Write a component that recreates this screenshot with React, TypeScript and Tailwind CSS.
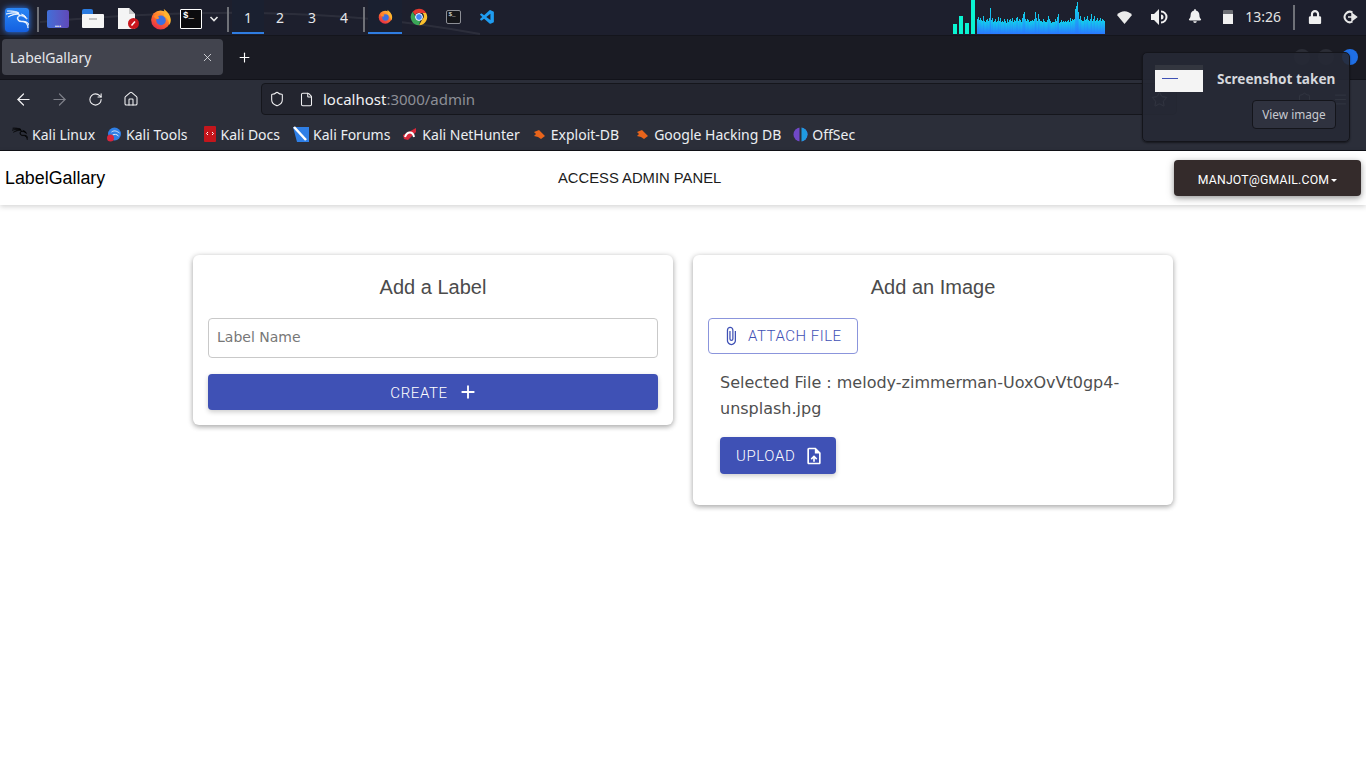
import { ArrowLeft, ArrowRight, File, Home, Menu, Plus, RotateCw, Shield, Star, X } from 'lucide-react';
import { FaBell, FaLock } from 'react-icons/fa';
import { MdAdd, MdAttachFile, MdOutlineUploadFile } from 'react-icons/md';
import { SiKalilinux } from 'react-icons/si';
import { VscVscode } from 'react-icons/vsc';

const graphHeights = [
  15, 17, 14, 16, 14, 13, 18, 13, 12, 14, 15, 13, 16, 26, 14, 16, 12, 13, 15, 12, 13, 17, 13, 16, 12, 13, 12, 15, 13,
  11, 15, 12, 14, 15, 13, 16, 12, 14, 13, 16, 17, 13, 15, 14, 12, 16, 20, 22, 15, 13, 15, 14, 12, 13, 13, 14, 13, 15,
  22, 16, 13, 20, 15, 13, 13, 12, 15, 13, 12, 12, 14, 18, 15, 13, 11, 12, 12, 12, 15, 13, 17, 20, 11, 12, 14, 12, 13,
  12, 13, 12, 13, 14, 12, 16, 13, 15, 14, 15, 25, 28, 32, 22, 15, 18, 14, 13, 13, 17, 14, 15, 18, 14, 13, 15, 20, 13,
  15, 18, 13, 14, 16, 13, 14, 16, 13, 15, 14, 13,
];

function Firefox({ size = 20 }: { size?: number }) {
  return (
    <svg width={size} height={size} viewBox="0 0 24 24">
      <defs>
        <linearGradient id="ff" x1="0.8" y1="0" x2="0.2" y2="1">
          <stop offset="0" stopColor="#ffc53a" />
          <stop offset="0.5" stopColor="#ff6a2a" />
          <stop offset="1" stopColor="#e2264d" />
        </linearGradient>
      </defs>
      <circle cx="11.6" cy="13" r="10.4" fill="url(#ff)" />
      <path d="M15 1c3 2 7 6 7.6 11 .3 3-.5 5-1.6 6.5 0-4-2-8-6-9.500C16 7 16 4 15 1z" fill="#ffb52e" />
      <circle cx="12" cy="13.500" r="5.200" fill="#3d6fe0" />
      <path d="M4 9c2-2 5-3 8-2.500-2 .5-3 1.800-3.500 3 3 1 1 3-1 2.500C6 11.500 5 10.500 4 9z" fill="#ff8a2b" />
    </svg>
  );
}

function Chrome() {
  return (
    <svg width="18" height="18" viewBox="0 0 24 24">
      <path d="M12 1a11 11 0 0 1 9.500 5.500H12a5.500 5.500 0 0 0-5 3.200L3.500 5A11 11 0 0 1 12 1z" fill="#e5392f" />
      <path d="M21.500 6.500A11 11 0 0 1 12 23l4.700-8.200a5.500 5.500 0 0 0 0-8.300z" fill="#fbc02d" />
      <path d="M12 23A11 11 0 0 1 3.500 5L8 12.800a5.500 5.500 0 0 0 5.500 4.500z" fill="#3aa757" />
      <circle cx="12" cy="12" r="4.600" fill="#4285f4" stroke="#fff" strokeWidth="1.300" />
    </svg>
  );
}

function Terminal({ small = false }: { small?: boolean }) {
  return small ? (
    <div className="h-[14px] w-[15px] rounded-[2px] border border-[#8d8f96] bg-[#15161a] pl-[2px] font-['Liberation_Mono',monospace] text-[6px] leading-[8px] text-white">
      $_
    </div>
  ) : (
    <div className="h-[20px] w-[22px] rounded-[1px] border border-white bg-[#0b0b0e] pl-[2px] font-['Liberation_Mono',monospace] text-[9px] font-bold leading-[13px] text-white">
      $_
    </div>
  );
}

function Separator() {
  return <div className="h-[25px] w-[2px] bg-[#6f7178]" />;
}

function Workspace({ n, active = false }: { n: number; active?: boolean }) {
  return (
    <div
      className={`flex h-[34px] w-[32px] items-center justify-center border-b-2 pt-[2px] text-[14px] text-[#e4e6ea] ${
        active ? 'border-[#2f7de1] bg-[#1a2030]' : 'border-transparent'
      }`}
    >
      {n}
    </div>
  );
}

function TopPanel() {
  return (
    <div className="relative flex h-[36px] items-start justify-between border-b border-[#14151c] bg-[#1d1f2d] font-['Noto_Sans',sans-serif]">
      <svg className="absolute inset-0" width="1366" height="36" aria-hidden="true">
        <path d="M40 22 C 180 10, 330 6, 480 34" stroke="#ffffff" strokeOpacity="0.07" strokeWidth="2" fill="none" />
      </svg>
      <div className="relative flex items-center">
        <div className="ml-[5px] mt-[5px] flex h-[24px] w-[24px] items-center justify-center rounded-[3px] bg-gradient-to-b from-[#2a86f5] to-[#1560e0] text-white shadow-[0_0_6px_#2f80ff]">
          <SiKalilinux size={23} className="stroke-white stroke-[0.7]" />
        </div>
        <div className="ml-[8px] mt-[4px]">
          <Separator />
        </div>
        <div className="ml-[8px] mt-[3px] flex h-[18px] w-[22px] items-end justify-center rounded-[2px] bg-gradient-to-r from-[#3f6fd8] to-[#5f49b8] pb-[1px] text-[8px] font-bold leading-[6px] text-white">
          ...
        </div>
        <div className="ml-[13px] mt-[3px] flex h-[20px] w-[22px] flex-col">
          <div className="h-[5px] w-[11px] rounded-t-[2px] bg-[#2a7be0]" />
          <div className="flex h-[14px] items-start justify-center rounded-[1px] bg-[#f5f5f5] pt-[4px]">
            <div className="h-[2px] w-[8px] bg-[#c4c4c4]" />
          </div>
        </div>
        <svg className="ml-[14px] mt-[3px]" width="22" height="23" viewBox="0 0 22 23">
          <path d="M0 1h11l6 6v15H0z" fill="#f4f4f4" />
          <path d="M11 1l6 6h-6z" fill="#c9c9c9" />
          <circle cx="15.500" cy="16.500" r="5.500" fill="#c8161d" />
          <path d="M13.500 18.500l3.500-4" stroke="#fff" strokeWidth="1.500" />
        </svg>
        <div className="ml-[10px] mt-[4px]">
          <Firefox size={22} />
        </div>
        <div className="ml-[8px] mt-[3px]">
          <Terminal />
        </div>
        <svg className="ml-[7px] mt-[4px]" width="10" height="8" viewBox="0 0 10 8">
          <path d="M1.500 2 L5 5.500 L8.500 2" stroke="#e6e6e6" strokeWidth="1.600" fill="none" />
        </svg>
        <div className="ml-[8px] mt-[4px]">
          <Separator />
        </div>
        <div className="ml-[3px] flex">
          <Workspace n={1} active />
          <Workspace n={2} />
          <Workspace n={3} />
          <Workspace n={4} />
        </div>
        <div className="ml-[3px] mt-[4px]">
          <Separator />
        </div>
        <div className="ml-[3px] flex">
          <div className="flex h-[34px] w-[34px] items-center justify-center border-b-2 border-[#2f7de1] bg-[#1a2030]">
            <Firefox size={15} />
          </div>
          <div className="flex h-[34px] w-[34px] items-center justify-center">
            <Chrome />
          </div>
          <div className="flex h-[34px] w-[34px] items-center justify-center">
            <Terminal small />
          </div>
          <div className="flex h-[34px] w-[34px] items-center justify-center text-[#1f9cf0]">
            <VscVscode size={17} />
          </div>
        </div>
      </div>
      <div className="relative flex items-start">
        <svg width="152" height="34" viewBox="0 0 152 34" aria-hidden="true">
          <defs>
            <linearGradient id="net" x1="0" y1="0" x2="0" y2="1">
              <stop offset="0" stopColor="#12d0ec" />
              <stop offset="1" stopColor="#2a78ff" />
            </linearGradient>
          </defs>
          <rect x="0" y="24" width="4" height="10" fill="#0af5d2" />
          <rect x="6" y="16" width="4" height="18" fill="#0af5d2" />
          <rect x="12" y="23" width="4" height="11" fill="#0af5d2" />
          <rect x="18" y="0" width="4" height="34" fill="#0af5d2" />
          {graphHeights.map((h, i) => (
            <rect key={i} x={24 + i} y={34 - h} width="1" height={h} fill="url(#net)" />
          ))}
        </svg>
        <svg className="ml-[12px] mt-[11px]" width="15" height="13" viewBox="0 0 15 13">
          <path d="M0 4 C4 -1 11 -1 15 4 L7.500 13z" fill="#ebebeb" />
        </svg>
        <svg className="ml-[19px] mt-[9px]" width="17" height="16" viewBox="0 0 17 16">
          <path d="M0 5h3l5-5v16l-5-5H0z" fill="#f0f0f0" />
          <path d="M10 2.500a5.500 5.500 0 0 1 0 11" stroke="#f0f0f0" strokeWidth="2" fill="none" />
          <path d="M10 5.500a2.500 2.500 0 0 1 0 5z" fill="#f0f0f0" />
        </svg>
        <div className="ml-[20px] mt-[9px] text-[#f0f0f0]">
          <FaBell size={14} />
        </div>
        <div className="ml-[21px] mt-[10px] flex h-[14px] w-[10px] flex-col rounded-[1px] bg-[#6d6f75]">
          <div className="mt-[4px] h-[10px] bg-[#f0f0f0]" />
        </div>
        <div className="ml-[12px] mt-[7px] text-[14px] leading-[20px] text-[#e4e4e4]">13:26</div>
        <div className="ml-[12px] mt-[5px]">
          <Separator />
        </div>
        <div className="ml-[13px] mt-[10px] text-[#f0f0f0]">
          <FaLock size={14} />
        </div>
        <svg className="ml-[21px] mr-[8px] mt-[10px]" width="15" height="14" viewBox="0 0 15 14">
          <path d="M9.500 2.500A5.200 5.200 0 1 0 9.500 11.500" stroke="#e8e8e8" strokeWidth="2" fill="none" />
          <path d="M5 7h6M9 3.500L13.500 7 9 10.500z" stroke="#e8e8e8" strokeWidth="1.500" fill="#e8e8e8" />
        </svg>
      </div>
    </div>
  );
}

function TabBar() {
  return (
    <div className="flex h-[44px] items-center justify-between border-b border-[#12131a] bg-[#1a1b23] pb-[1px] font-['Noto_Sans',sans-serif]">
      <div className="flex items-center">
        <div className="ml-[2px] flex h-[36px] w-[221px] items-center justify-between rounded-[4px] bg-[#42444e] pl-[8px] pr-[9px] text-[14px] text-[#e6e7eb]">
          LabelGallary
          <X size={13} strokeWidth={1.500} />
        </div>
        <Plus size={15} className="ml-[14px] text-white" strokeWidth={1.800} />
      </div>
      <div className="mr-[8px] flex gap-[8px]">
        <div className="h-[16px] w-[16px] rounded-full bg-[#2b2d36]" />
        <div className="h-[16px] w-[16px] rounded-full bg-[#2b2d36]" />
        <div className="h-[16px] w-[16px] rounded-full bg-[#1f6fe5]" />
      </div>
    </div>
  );
}

function NavBar() {
  return (
    <div className="flex h-[39px] items-center bg-[#2b2e39] pb-[1px] font-['Noto_Sans',sans-serif] text-[#f1f1f3]">
      <ArrowLeft size={19} strokeWidth={1.500} className="ml-[14px]" />
      <ArrowRight size={19} strokeWidth={1.500} className="ml-[17px] text-[#7d7f88]" />
      <RotateCw size={15} strokeWidth={1.700} className="ml-[19px]" />
      <Home size={16} strokeWidth={1.600} className="ml-[20px]" />
      <div className="ml-[122px] flex h-[32px] w-[916px] items-center rounded-[4px] border border-[#15161c] bg-[#23252f] text-[15px]">
        <Shield size={16} strokeWidth={1.600} className="ml-[7px]" />
        <File size={15} strokeWidth={1.700} className="ml-[14px]" />
        <span className="ml-[9px]">
          localhost<span className="text-[#8d8f97]">:3000/admin</span>
        </span>
        <div className="ml-auto flex h-[32px] w-[34px] items-center justify-center">
          <Star size={17} strokeWidth={1.400} className="text-[#9a9ca4]" />
        </div>
      </div>
      <Shield size={15} strokeWidth={1.500} className="ml-[120px] text-[#9a9ca4]" />
      <Menu size={15} strokeWidth={1.500} className="ml-[21px] text-[#9a9ca4]" />
    </div>
  );
}

function Bookmark({ label, icon, gap = 'ml-[13px]' }: { label: string; icon: React.ReactNode; gap?: string }) {
  return (
    <div className={`flex items-center ${gap}`}>
      {icon}
      <span className="ml-[4px]">{label}</span>
    </div>
  );
}

function Bug() {
  return (
    <svg width="16" height="14" viewBox="0 0 14 14">
      <path d="M2 5 L7 3 L13 9 L9 12 L6 10 L2 9 L4 7z" fill="#e8641b" />
    </svg>
  );
}

function Bookmarks() {
  return (
    <div className="flex h-[31px] items-center bg-[#2b2e39] pb-[1px] pl-[12px] font-['Noto_Sans',sans-serif] text-[14px] text-[#eceef2]">
      <Bookmark
        gap=""
        label="Kali Linux"
        icon={<SiKalilinux size={16} className="stroke-black stroke-[0.6] text-black" />}
      />
      <Bookmark
        gap="ml-[11px]"
        label="Kali Tools"
        icon={
          <svg width="16" height="15" viewBox="0 0 15 15">
            <circle cx="8" cy="7" r="6.500" fill="#2f7fe6" />
            <path d="M5 5c3-2 5-1 8 1M6 8c2-1 4-1 6 1" stroke="#dfeaff" strokeWidth="1" fill="none" />
            <circle cx="4" cy="11" r="3.500" fill="#d7263d" />
          </svg>
        }
      />
      <Bookmark
        gap="ml-[15px]"
        label="Kali Docs"
        icon={
          <svg width="14" height="16" viewBox="0 0 14 16">
            <rect x="1" y="0" width="12" height="16" rx="1" fill="#c4161c" />
            <path d="M5 6 L3.500 7.500 L5 9 M9 6 L10.500 7.500 L9 9" stroke="#fff" strokeWidth="1" fill="none" />
          </svg>
        }
      />
      <Bookmark
        gap="ml-[13px]"
        label="Kali Forums"
        icon={
          <svg width="16" height="16" viewBox="0 0 16 16">
            <path d="M0 1h16v15H4z" fill="#2f7fe6" />
            <path d="M1 1 L13 14" stroke="#fff" strokeWidth="2.500" />
          </svg>
        }
      />
      <Bookmark
        gap="ml-[12px]"
        label="Kali NetHunter"
        icon={
          <svg width="16" height="16" viewBox="0 0 16 16">
            <path d="M1 9 L14 2 L14 6 L6 14 L2 13z" fill="#d8283a" />
            <path d="M3 11 C5 5, 11 5, 12 11" stroke="#fff" strokeWidth="2" fill="none" />
          </svg>
        }
      />
      <Bookmark gap="ml-[11px]" label="Exploit-DB" icon={<Bug />} />
      <Bookmark gap="ml-[15px]" label="Google Hacking DB" icon={<Bug />} />
      <Bookmark
        gap="ml-[12px]"
        label="OffSec"
        icon={
          <svg width="15" height="15" viewBox="0 0 15 15">
            <circle cx="7.500" cy="7.500" r="7" fill="#7048c8" />
            <path d="M7.500 .5a7 7 0 0 1 0 14z" fill="#1f9be0" />
            <rect x="6.500" y="0" width="2" height="15" fill="#2b2e39" />
          </svg>
        }
      />
    </div>
  );
}

function ScreenshotToast() {
  return (
    <div className="absolute left-[1142px] top-[52px] h-[90px] w-[208px] rounded-[5px] border border-[#14151b] bg-[#262935]/90 font-['Noto_Sans',sans-serif] shadow-[0_1px_2px_rgba(0,0,0,0.5)]">
      <div className="flex items-start pl-[12px] pt-[12px]">
        <div className="h-[27px] w-[48px] bg-[#f4f4f4]">
          <div className="h-[5px] bg-[#33363f]" />
          <div className="ml-[7px] mt-[8px] h-[1px] w-[16px] bg-[#3f51b5]" />
        </div>
        <div className="ml-[14px] text-[13.600px] font-bold leading-[27px] text-[#d5d7dc]">Screenshot taken</div>
      </div>
      <div className="mr-[13px] mt-[8px] flex justify-end">
        <div className="flex h-[29px] w-[84px] items-center justify-center rounded-[4px] border border-[#14151b] bg-[#2f323f] text-[11.800px] text-[#c8cad0]">
          View image
        </div>
      </div>
    </div>
  );
}

function AppNav() {
  return (
    <div className="flex h-[55px] items-center justify-between border-t border-[#101116] bg-white px-[5px] font-['Liberation_Sans',sans-serif] shadow-[0_2px_5px_rgba(0,0,0,0.16)]">
      <span className="pt-[1px] text-[17.850px] text-black">LabelGallary</span>
      <span className="pt-[1px] text-[14.800px] text-[#1c1c1c]">ACCESS ADMIN PANEL</span>
      <button className="flex h-[36px] w-[187px] items-center justify-center rounded-[4px] bg-[#342b2b] pt-[4px] font-['Roboto',sans-serif] text-[12.250px] tracking-[0.2px] text-white shadow-[0_2px_5px_rgba(0,0,0,0.26),0_2px_10px_rgba(0,0,0,0.2)]">
        MANJOT@GMAIL.COM
        <span className="ml-[2px] h-0 w-0 border-x-[3px] border-t-[3px] border-x-transparent border-t-white" />
      </button>
    </div>
  );
}

function AddLabelCard() {
  return (
    <div className="w-[480px] rounded-[6px] bg-white px-[15px] pb-[15px] pt-[19px] shadow-[0_2px_5px_rgba(0,0,0,0.22),0_1px_6px_rgba(0,0,0,0.18)]">
      <h2 className="text-center font-['Liberation_Sans',sans-serif] text-[20px] leading-[26px] text-[#4b4b4b]">
        Add a Label
      </h2>
      <input
        placeholder="Label Name"
        className="mt-[18px] block h-[40px] w-full rounded-[4px] border border-[#c9c9c9] px-[8px] pb-[2px] font-['DejaVu_Sans',sans-serif] text-[14px] placeholder:text-[#777]"
      />
      <button className="mt-[16px] flex h-[36px] w-full items-center justify-center rounded-[4px] bg-[#3f51b5] pl-[3px] pt-[2px] font-['Roboto',sans-serif] text-[15px] font-[350] tracking-[0.6px] text-white shadow-[0_2px_5px_rgba(0,0,0,0.2)]">
        CREATE
        <MdAdd size={22} className="ml-[9px] -mt-[2px]" />
      </button>
    </div>
  );
}

function AddImageCard() {
  return (
    <div className="w-[480px] rounded-[6px] bg-white px-[15px] pb-[31px] pt-[19px] shadow-[0_2px_5px_rgba(0,0,0,0.22),0_1px_6px_rgba(0,0,0,0.18)]">
      <h2 className="text-center font-['Liberation_Sans',sans-serif] text-[20px] leading-[26px] text-[#4b4b4b]">
        Add an Image
      </h2>
      <button className="mt-[18px] flex h-[36px] w-[150px] items-center rounded-[4px] border border-[#8b95dc] pl-[12px] font-['Roboto',sans-serif] text-[15px] font-[350] tracking-[0.5px] text-[#3f51b5]">
        <MdAttachFile size={20} className="mr-[7px]" />
        ATTACH FILE
      </button>
      <p className="ml-[12px] mt-[16px] w-[420px] font-['DejaVu_Sans',sans-serif] text-[16px] leading-[26px] text-[#4f4f4f]">
        Selected File : melody-zimmerman-UoxOvVt0gp4-unsplash.jpg
      </p>
      <button className="ml-[12px] mt-[15px] flex h-[37px] w-[116px] items-center rounded-[4px] bg-[#3f51b5] pl-[16px] pt-[1px] font-['Roboto',sans-serif] text-[15px] font-[350] tracking-[0.6px] text-white shadow-[0_2px_5px_rgba(0,0,0,0.2)]">
        UPLOAD
        <MdOutlineUploadFile size={20} className="ml-[9px]" />
      </button>
    </div>
  );
}

export default function App() {
  return (
    <div className="relative h-[768px] w-[1366px] overflow-hidden bg-white">
      <TopPanel />
      <TabBar />
      <NavBar />
      <Bookmarks />
      <ScreenshotToast />
      <AppNav />
      <div className="flex items-start justify-center gap-[20px] pt-[50px]">
        <AddLabelCard />
        <AddImageCard />
      </div>
    </div>
  );
}
